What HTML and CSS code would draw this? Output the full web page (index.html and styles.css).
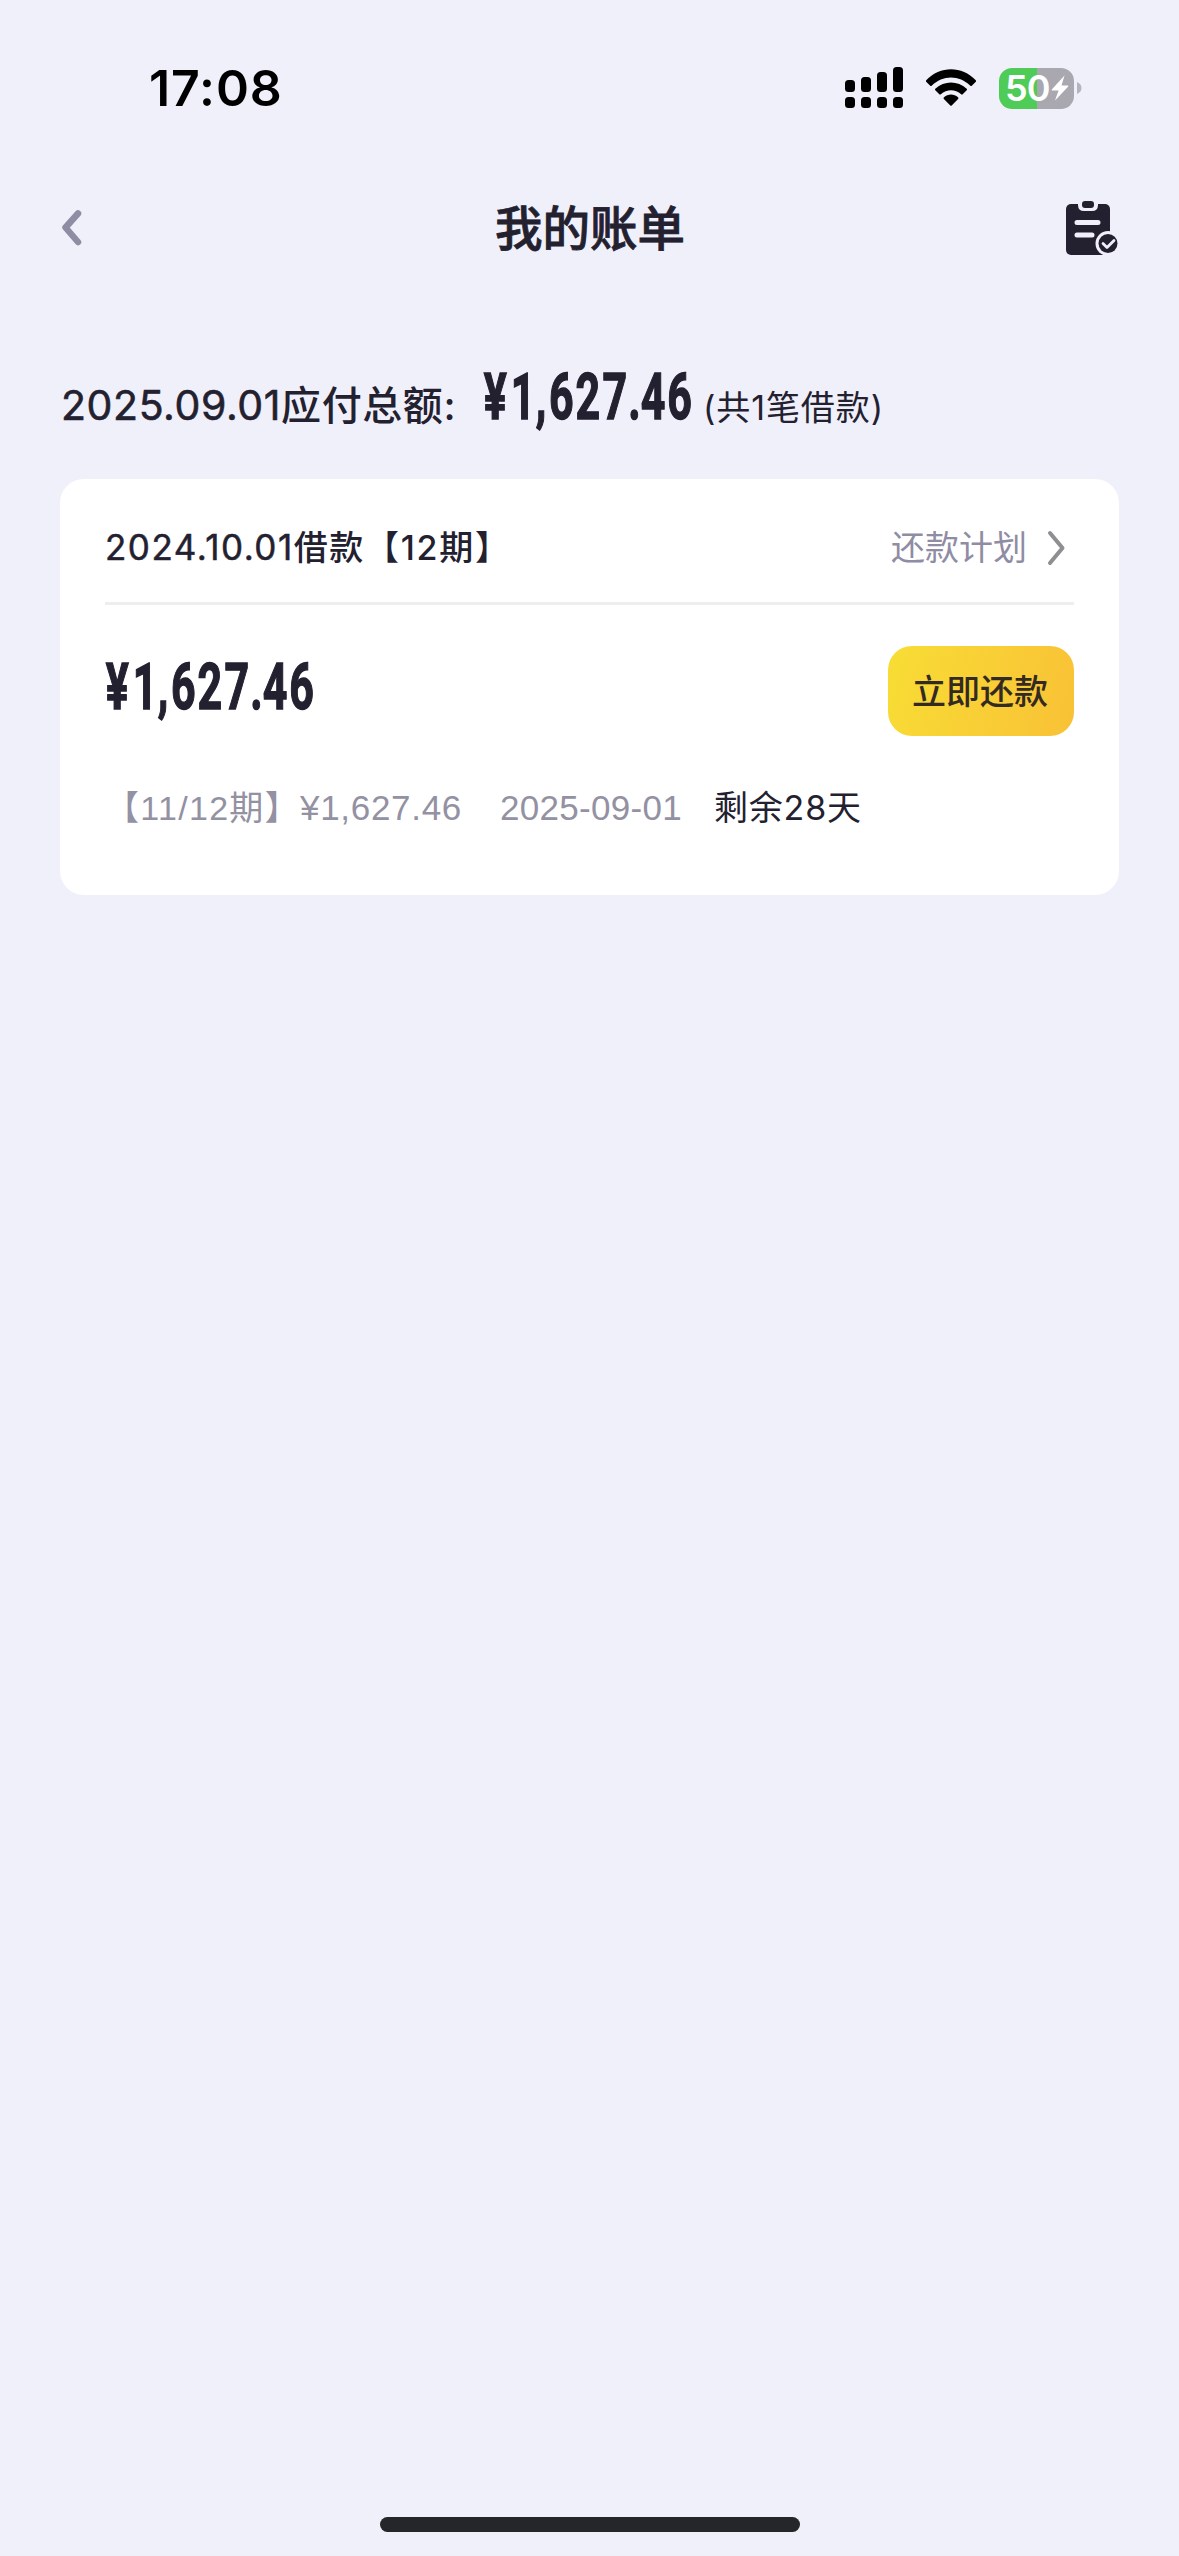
FILE: index.html
```html
<!DOCTYPE html>
<html lang="zh-CN">
<head>
<meta charset="utf-8">
<title>我的账单</title>
<link rel="stylesheet" href="styles.css">
</head>
<body>
<div class="screen">
  <div class="status">
    <span class="time">17:08</span>
    <div class="indicators">
      <svg class="signal" width="58" height="42" viewBox="0 0 58 42">
        <rect x="0" y="13" width="10" height="12" rx="3.5"/><rect x="16" y="10" width="10" height="15" rx="3.5"/><rect x="32" y="5" width="10" height="20" rx="3.5"/><rect x="48" y="0" width="10" height="25" rx="3.5"/>
        <rect x="0" y="30" width="10" height="11" rx="3.5"/><rect x="16" y="30" width="10" height="11" rx="3.5"/><rect x="32" y="30" width="10" height="11" rx="3.5"/><rect x="48" y="30" width="10" height="11" rx="3.5"/>
      </svg>
      <svg class="wifi" width="52" height="38" viewBox="0 0 52 38">
        <path d="M1.2 11.2C15-3.5 37-3.5 50.8 11.2c.5.5.5 1 0 1.500l-4 4c-.5.500-1 .500-1.500 0-11-11-27.600-11-38.600 0-.5.500-1 .500-1.500 0l-4-4c-.5-.500-.5-1 0-1.500z"/>
        <path d="M10.300 19.800c9-8.500 22.400-8.500 31.400 0 .5.500.5 1 0 1.500l-4 4c-.5.500-1 .500-1.500 0-6-5.300-14.400-5.300-20.400 0-.5.500-1 .500-1.500 0l-4-4c-.5-.500-.5-1 0-1.500z"/>
        <path d="M19 28.300c4-3.600 10-3.600 14 0 .6.500.6 1 .1 1.600l-6.400 6.500c-.5.500-.9.500-1.400 0l-6.400-6.500c-.5-.600-.5-1.100.1-1.600z"/>
      </svg>
      <div class="battery">
        <span class="level">50</span>
        <svg width="18" height="26" viewBox="0 0 18 26"><path d="M13.500.5 1 14.200c-.5.700-.3 1.300.6 1.300h6L4 25.500 17 11.700c.6-.700.3-1.300-.5-1.300h-6z" fill="#fff"/></svg>
      </div>
      <svg class="nub" width="5" height="12" viewBox="0 0 5 12"><path d="M0 0c6 2.500 6 9.500 0 12z" fill="#b4b4bd"/></svg>
    </div>
  </div>

  <header class="nav">
    <svg width="20" height="36" viewBox="0 0 20 36"><path d="M17 3.500 4.500 17.500 17 32" fill="none" stroke="#8f8da3" stroke-width="6.500" stroke-linecap="round" stroke-linejoin="round"/></svg>
    <h1 class="title">我的账单</h1>
    <svg width="54" height="56" viewBox="0 0 54 56">
      <rect x="1" y="4" width="44" height="51" rx="5" fill="#232130"/>
      <path d="M13 0h20v5q0 6-6 6h-8q-6 0-6-6z" fill="#f0f0fa"/>
      <rect x="17" y="1" width="12" height="7" rx="3" fill="#232130"/>
      <path d="M12 22.500h21M12 35h15" stroke="#f0f0fa" stroke-width="5" stroke-linecap="round"/>
      <circle cx="43" cy="43.500" r="12.500" fill="#f0f0fa"/>
      <circle cx="43" cy="43.500" r="9.500" fill="#232130"/>
      <path d="m38 43.500 4 4 7-7" fill="none" stroke="#f0f0fa" stroke-width="2.800" stroke-linecap="round" stroke-linejoin="round"/>
    </svg>
  </header>

  <section class="summary">
    <span class="due"><span class="due-date">2025.09.01</span>应付总额:</span>
    <svg class="amount" width="210" height="72" viewBox="0 0 210 72"><text transform="scale(.66 1)" x="1 42 80 100 140 181 220 239 279" y="54">¥1,627.46</text></svg>
    <span class="count">(共1笔借款)</span>
  </section>

  <main class="card">
    <div class="card-head">
      <span class="loan"><span class="loan-date">2024.10.01</span>借款【12期】</span>
      <span class="plan">还款计划
        <svg width="20" height="36" viewBox="0 0 20 36"><path d="m4 3 12.500 15L4 33" fill="none" stroke="#8e8e93" stroke-width="4" stroke-linecap="round" stroke-linejoin="round"/></svg>
      </span>
    </div>
    <div class="pay">
      <svg class="amount" width="210" height="72" viewBox="0 0 210 72"><text transform="scale(.66 1)" x="1 42 80 100 140 181 220 239 279" y="54">¥1,627.46</text></svg>
      <button class="repay">立即还款</button>
    </div>
    <div class="detail">
      <span class="period">【11/12期】<span class="sum">¥1,627.46</span></span>
      <span class="date">2025-09-01</span>
      <span class="left">剩余28天</span>
    </div>
  </main>
  <div class="home"></div>
</div>
</body>
</html>
```
FILE: styles.css
```css
* { box-sizing: border-box; }
body { margin: 0; background: #f0f0fa; }
.screen {
  width: 1179px; height: 2556px;
  display: flex; flex-direction: column;
  background: #f0f0fa; color: #232130;
  font-family: Inter, "Noto Sans CJK SC", sans-serif;
  white-space: nowrap;
}
svg { display: block; flex: none; overflow: visible; }

.status { height: 176px; padding: 0 97px 0 149px; display: flex; justify-content: space-between; align-items: center; color: #000; }
.time { font-size: 50px; font-weight: 600; line-height: 60px; letter-spacing: 0.9px; }
.indicators { display: flex; align-items: center; }
.wifi { margin-left: 22px; }
.battery {
  width: 75px; height: 41px; margin-left: 22px; padding-left: 6px;
  display: flex; align-items: center;
  border-radius: 13px;
  background: linear-gradient(90deg, #4fcb58 51%, #a9a8b1 51%);
}
.level { width: 46px; color: #fff; font-size: 36px; font-weight: 600; line-height: 41px; letter-spacing: -1px; }
.nub { margin-left: 3px; }

.nav { height: 104px; padding: 0 60px 0 61px; display: flex; justify-content: space-between; align-items: center; }
.title { margin: 0; padding: 2px 0 0 34px; font-size: 47.5px; font-weight: 500; line-height: 70px; -webkit-text-stroke: 0.8px #232130; }

.summary { height: 199px; padding: 85px 61px 0; display: flex; align-items: flex-start; }
.due { width: 422px; font-size: 40px; font-weight: 500; line-height: 60px; margin-top: 10px; letter-spacing: 0.6px; }
.due-date { font-weight: 400; font-size: 41px; letter-spacing: 0.6px; -webkit-text-stroke: 0.6px #232130; }
.amount text { font-family: Roboto, sans-serif; font-weight: 700; font-size: 65px; fill: #232130; stroke: #232130; stroke-width: 1.4px; }
.count { margin: 18px 0 0 10px; font-size: 34px; line-height: 50px; letter-spacing: 0.9px; }

.card { height: 416px; margin: 0 60px; padding: 0 45px; border-radius: 24px; background: #fff; }
.card-head { height: 126px; padding-top: 14px; border-bottom: 3px solid #eeeef0; display: flex; justify-content: space-between; align-items: center; }
.loan { font-size: 34px; font-weight: 500; line-height: 50px; letter-spacing: 1.7px; }
.loan-date { font-weight: 400; font-size: 35px; letter-spacing: 1.5px; -webkit-text-stroke: 0.5px #232130; }
.plan { padding-right: 8px; display: flex; align-items: center; gap: 19px; font-size: 34px; line-height: 50px; color: #8f8da3; }
.pay { height: 172px; display: flex; justify-content: space-between; align-items: center; }
.repay { width: 186px; height: 90px; padding: 0 2px 2px 0; border: 0; border-radius: 24px; font: 500 34px/50px "Noto Sans CJK SC", sans-serif; color: #332b22; background: linear-gradient(105deg, #f8dd35, #f9c136); }
.detail { height: 62px; display: flex; align-items: center; font-size: 34px; line-height: 50px; color: #9391a2; }
.period, .date { font-family: "Liberation Sans", "Noto Sans CJK SC", sans-serif; }
.period { width: 395px; letter-spacing: 1.3px; }
.sum { font-size: 35px; letter-spacing: 0.7px; }
.date { width: 214px; font-size: 35px; letter-spacing: 0.3px; }
.left { color: #232130; letter-spacing: 0.8px; }

.home { width: 420px; height: 15px; margin: auto auto 24px; border-radius: 8px; background: #25262a; }
```
